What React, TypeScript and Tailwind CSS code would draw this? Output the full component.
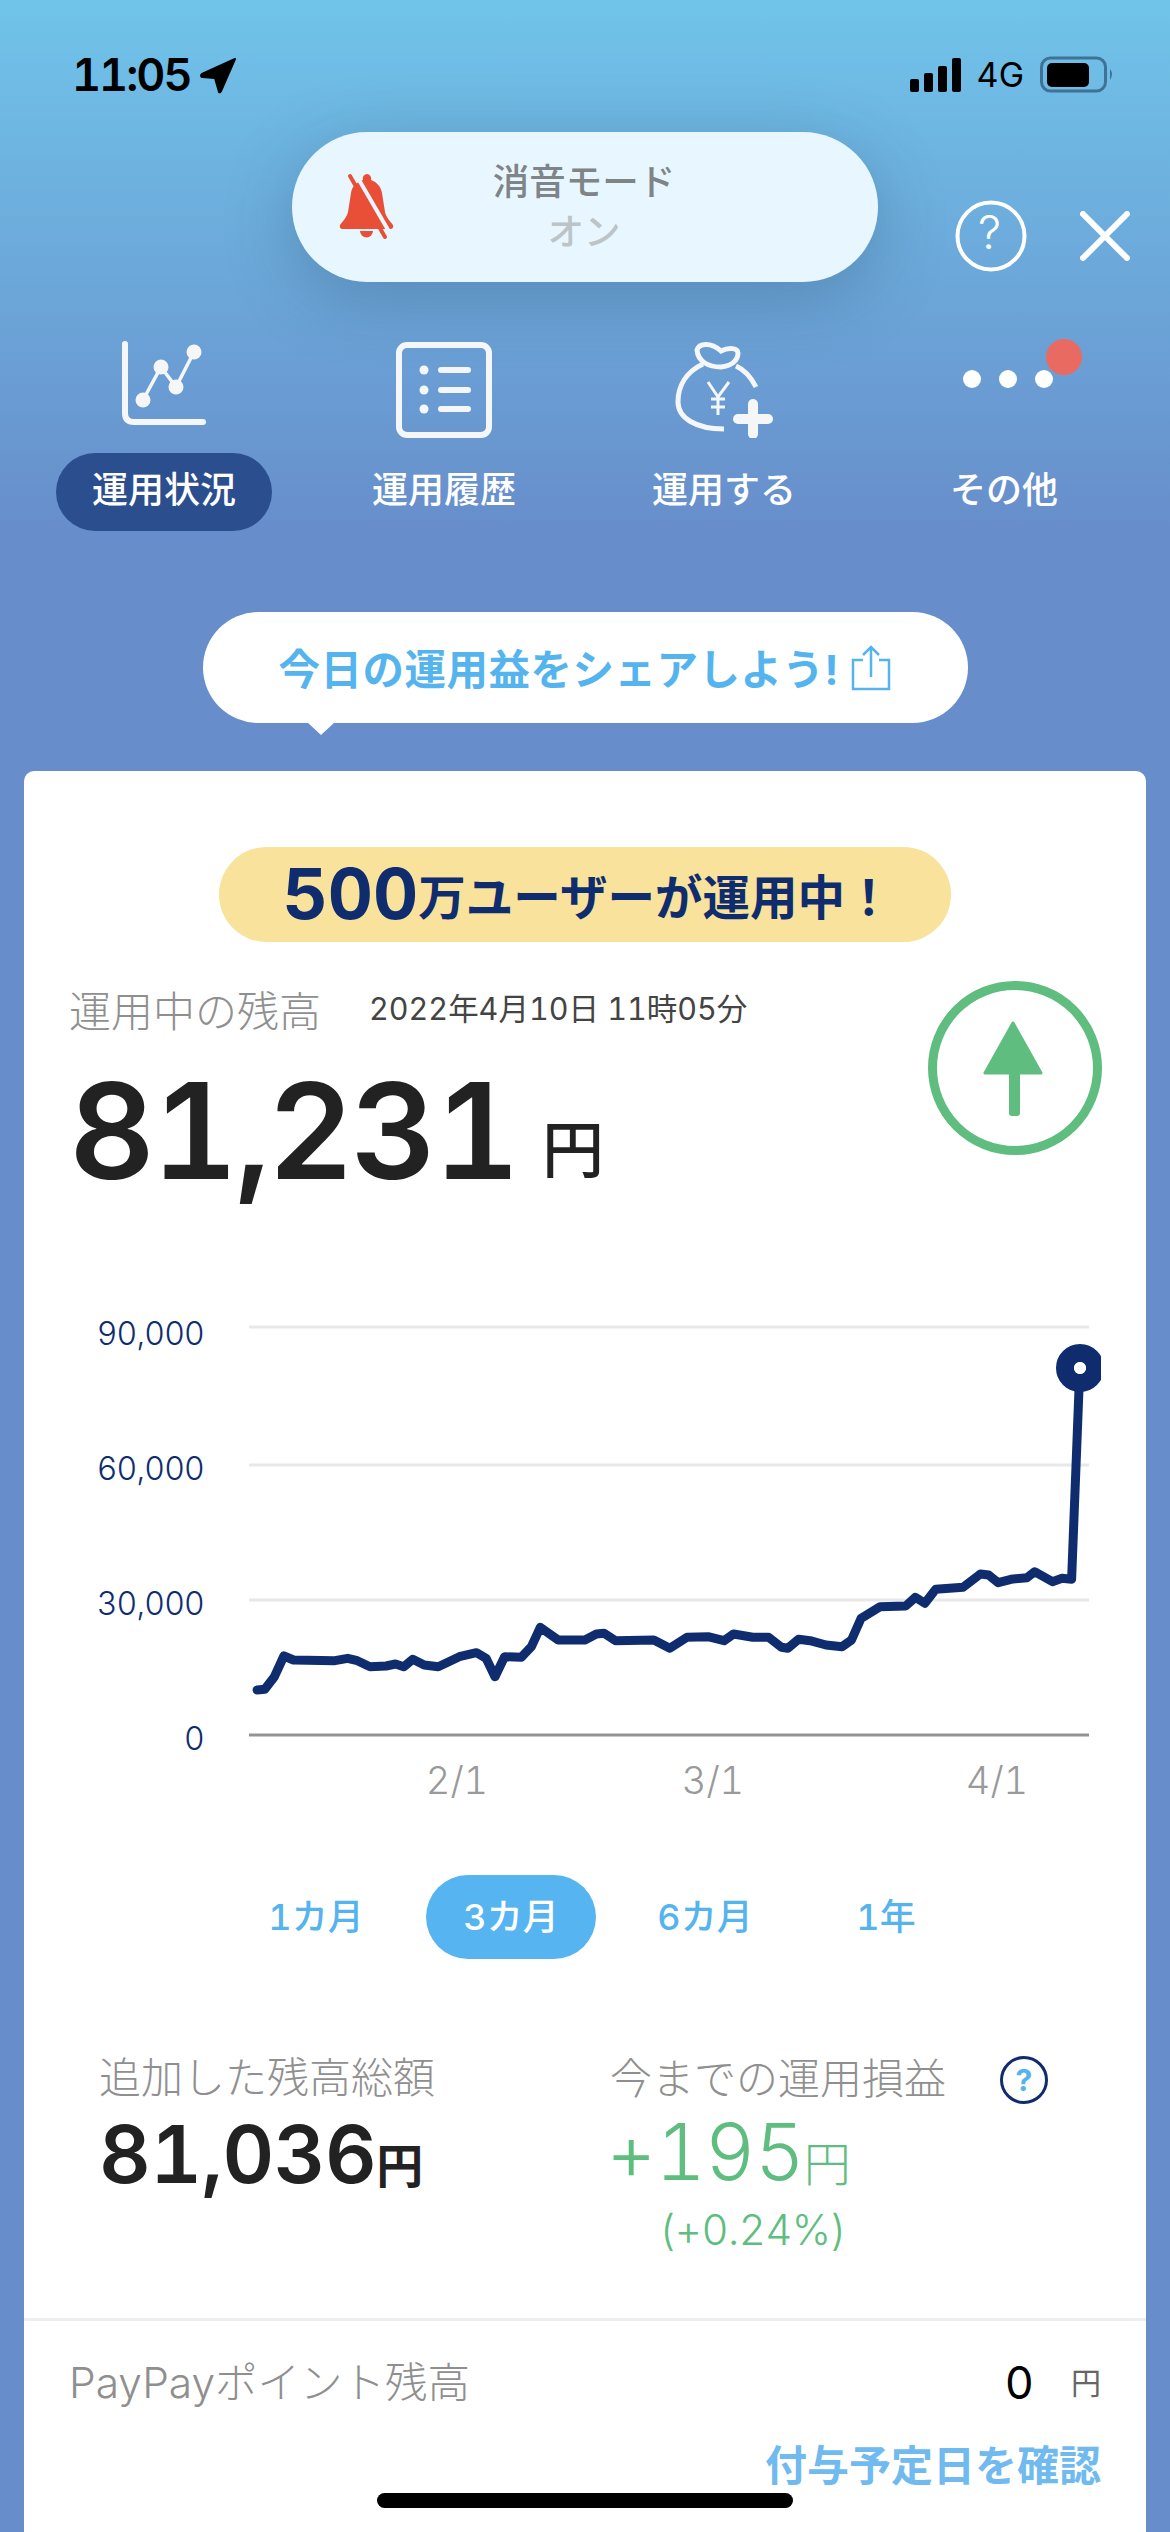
import React from 'react';

const FONT = '[font-family:Inter,"Noto_Sans_CJK_JP",sans-serif]';

// line points measured on the chart, page px = 150 + x / 1.568, 1300 + y / 3
const LINE = [
  [168, 1170], [180, 1168], [195, 1130], [210, 1068], [225, 1080], [290, 1082], [310, 1075], [325, 1082],
  [345, 1100], [370, 1098], [385, 1092], [398, 1100], [412, 1078], [430, 1095], [452, 1100], [485, 1070],
  [512, 1058], [527, 1075], [541, 1130], [556, 1070], [582, 1072], [598, 1040], [612, 982], [640, 1020],
  [682, 1020], [700, 1002], [712, 1000], [730, 1022], [790, 1020], [815, 1045], [842, 1012], [875, 1010],
  [900, 1022], [915, 1002], [945, 1012], [970, 1012], [990, 1042], [1000, 1045], [1017, 1018], [1035, 1022],
  [1060, 1035], [1085, 1040], [1100, 1020], [1115, 955], [1145, 920], [1185, 918], [1200, 892], [1215, 910],
  [1232, 868], [1275, 862], [1302, 822], [1315, 825], [1330, 848], [1350, 838], [1375, 833], [1387, 815],
  [1415, 845], [1430, 835], [1445, 838], [1458, 205],
];

const linePoints = LINE.map(([x, y]) => `${(126 + x / 1.568).toFixed(1)},${(y / 3).toFixed(1)}`).join(' ');

function StatusBar() {
  return (
    <div className="h-[132px] flex justify-between items-start pl-[72px] pr-[56px] pt-[56px] text-black">
      <div className="flex items-center h-[38px]">
        <span className="w-[128px] text-[45px] leading-[38px] font-semibold tracking-[-2px]">11:05</span>
        <svg width="37" height="37" viewBox="0 0 37 37">
          <path d="M35 2 L2 17 Q0 19 2 20 L15 21 L19 35 Q20 36 21 34 Z" fill="#000" stroke="#000" strokeWidth="2" strokeLinejoin="round" />
        </svg>
      </div>
      <div className="flex items-center h-[38px]">
        <svg width="52" height="34" viewBox="0 0 52 34" className="mr-[15px]">
          <rect x="0" y="21" width="9" height="13" rx="2" fill="#000" />
          <rect x="14" y="15" width="9" height="19" rx="2" fill="#000" />
          <rect x="28" y="8" width="9" height="26" rx="2" fill="#000" />
          <rect x="42" y="0" width="9" height="34" rx="2" fill="#000" />
        </svg>
        <span className="text-[34px] leading-[38px] font-normal mr-[16px]">4G</span>
        <svg width="74" height="38" viewBox="0 0 74 38">
          <rect x="1.5" y="2" width="64" height="33" rx="9" fill="none" stroke="#3f7396" strokeWidth="3" />
          <rect x="7" y="7" width="42" height="24" rx="5" fill="#000" />
          <path d="M70 13 q4 5 0 11 z" fill="#3f7396" />
        </svg>
      </div>
    </div>
  );
}

function MuteBell() {
  return (
    <svg width="60" height="68" viewBox="0 0 60 68">
      <path
        d="M28.700 1a4.500 4.500 0 0 1 4.300 6c6 2 10 7 11 13l3 19c1 5 5 9 8 13q1 3-2 4H4q-3-1-2-4c3-4 7-8 8-13l3-19c1-7 6-11 12-13a4.500 4.500 0 0 1 3.700-6Z"
        fill="#e94f37"
      />
      <path d="M22 58h13a6.500 6.500 0 0 1-13 0Z" fill="#e94f37" />
      <line x1="17" y1="0" x2="53" y2="62" stroke="#e8f7ff" strokeWidth="4" />
      <line x1="12" y1="3" x2="47" y2="64" stroke="#e94f37" strokeWidth="4" strokeLinecap="round" />
    </svg>
  );
}

function ChartIcon() {
  return (
    <svg width="96" height="96" viewBox="0 0 96 96">
      <path d="M5 3 V72 Q5 81 14 81 H83" fill="none" stroke="#f5f6f8" strokeWidth="6" strokeLinecap="round" />
      <polyline points="23,59 41,26 56,46 74,11" fill="none" stroke="#f5f6f8" strokeWidth="3.500" />
      <circle cx="23" cy="59" r="7.500" fill="#f5f6f8" />
      <circle cx="41" cy="26" r="7.500" fill="#f5f6f8" />
      <circle cx="56" cy="46" r="7.500" fill="#f5f6f8" />
      <circle cx="74" cy="11" r="7.500" fill="#f5f6f8" />
    </svg>
  );
}

function ListIcon() {
  return (
    <svg width="96" height="96" viewBox="0 0 96 96">
      <rect x="3" y="3" width="90" height="90" rx="8" fill="none" stroke="#f5f6f8" strokeWidth="6" />
      {[28, 48, 67].map((y) => (
        <g key={y}>
          <circle cx="28" cy={y} r="4.500" fill="#f5f6f8" />
          <line x1="45" y1={y} x2="72" y2={y} stroke="#f5f6f8" strokeWidth="6" strokeLinecap="round" />
        </g>
      ))}
    </svg>
  );
}

function BagIcon() {
  return (
    <svg width="104" height="104" viewBox="0 0 104 104">
      <g fill="none" stroke="#f5f6f8" strokeWidth="5">
        <path d="M85 53 C80 43 74 36 65 32" />
        <path d="M32 30 C15 38 7 52 7 68 C7 84 25 95 53 95" />
        <path d="M26 16 C28 9 40 8 50 17 C58 13 67 14 67 19 C67 27 60 32 50 33 C38 33 27 28 26 16Z" />
      </g>
      <g fill="none" stroke="#f5f6f8" strokeWidth="3">
        <polyline points="37,48 47,63 58,48" />
        <line x1="47" y1="63" x2="47" y2="81" />
        <line x1="40" y1="65" x2="54" y2="65" />
        <line x1="40" y1="73" x2="54" y2="73" />
      </g>
      <line x1="82" y1="70" x2="82" y2="100" stroke="#f5f6f8" strokeWidth="10" strokeLinecap="round" />
      <line x1="67" y1="85" x2="97" y2="85" stroke="#f5f6f8" strokeWidth="10" strokeLinecap="round" />
    </svg>
  );
}

function NavItem({ label, active, children }: { label: string; active?: boolean; children: React.ReactNode }) {
  return (
    <div className="flex flex-col items-center">
      <div className="h-[96px] flex items-start justify-center">{children}</div>
      <div
        className={`mt-[15px] h-[78px] w-[216px] rounded-full flex items-center justify-center text-white text-[36px] leading-[72px] pb-[5px] font-medium ${
          active ? 'bg-[#2b4e8f]' : ''
        }`}
      >
        {label}
      </div>
    </div>
  );
}

function Chart() {
  return (
    <svg width="1122" height="510" viewBox="0 0 1122 510" className="block">
      <defs>
        <clipPath id="marker-clip">
          <rect x="1020" y="30" width="57" height="80" />
        </clipPath>
      </defs>
      {[27, 165, 300].map((y) => (
        <line key={y} x1="225" x2="1065" y1={y} y2={y} stroke="#e8e8e8" strokeWidth="3" />
      ))}
      <line x1="225" x2="1065" y1="435" y2="435" stroke="#939393" strokeWidth="3" />
      <g fontSize="32" fontWeight="300" letterSpacing="-0.8" fill="#0f2d6e" textAnchor="end" fontFamily='Inter, "Noto Sans CJK JP", sans-serif'>
        <text x="180" y="45">90,000</text>
        <text x="180" y="180">60,000</text>
        <text x="180" y="315">30,000</text>
        <text x="180" y="450">0</text>
      </g>
      <g fontSize="38" fontWeight="300" fill="#999999" textAnchor="middle" fontFamily='Inter, "Noto Sans CJK JP", sans-serif'>
        <text x="433" y="494">2/1</text>
        <text x="689" y="494">3/1</text>
        <text x="973" y="494">4/1</text>
      </g>
      <polyline points={linePoints} fill="none" stroke="#0f2d6e" strokeWidth="9" strokeLinejoin="round" strokeLinecap="round" />
      <g clipPath="url(#marker-clip)">
        <circle cx="1056" cy="68" r="15" fill="#fff" stroke="#0f2d6e" strokeWidth="18" />
      </g>
      <circle cx="1056" cy="68" r="6" fill="#fff" />
    </svg>
  );
}

export default function App() {
  return (
    <div className={`relative w-[1170px] h-[2532px] overflow-hidden flex flex-col bg-[#678dca] tabular-nums ${FONT}`}>
      <div className="absolute inset-x-0 top-0 h-[540px] bg-gradient-to-b from-[#70c4ea] to-[#678dca]" />

      <div className="relative flex flex-col flex-1">
        <StatusBar />

        <div className="h-[150px] flex">
          <div className="w-[292px]" />
          <div className="w-[586px] rounded-[75px] bg-[#e8f7ff] shadow-[0_16px_70px_rgba(30,60,90,0.28)] flex items-center pl-[46px]">
            <MuteBell />
            <div className="w-[350px] ml-[11px] flex flex-col items-center font-medium">
              <span className="text-[36.5px] leading-[50px] text-[#7f8487]">消音モード</span>
              <span className="text-[36.5px] leading-[50px] text-[#bcc4c8]">オン</span>
            </div>
          </div>
          <div className="flex items-start pt-[68px] pl-[77px]">
            <svg width="72" height="72" viewBox="0 0 72 72">
              <circle cx="36" cy="36" r="33.500" fill="none" stroke="#fff" strokeWidth="4" />
            </svg>
            <span className="w-0 -ml-[49px] mr-[49px] mt-[4px] text-[46px] leading-[56px] font-light text-white">?</span>
            <svg width="50" height="50" viewBox="0 0 50 50" className="ml-[53px] mt-[11px]">
              <path d="M3 3 L47 47 M47 3 L3 47" stroke="#fff" strokeWidth="6" strokeLinecap="round" />
            </svg>
          </div>
        </div>

        <div className="grid grid-cols-[280px_280px_280px_280px] px-[24px] mt-[60px]">
          <NavItem label="運用状況" active>
            <div className="ml-[7px] -mt-[1px]">
              <ChartIcon />
            </div>
          </NavItem>
          <NavItem label="運用履歴">
            <ListIcon />
          </NavItem>
          <NavItem label="運用する">
            <div className="-ml-[2px] -mt-[8px]">
              <BagIcon />
            </div>
          </NavItem>
          <NavItem label="その他">
            <div className="relative w-[92px] h-[96px]">
              <div className="absolute left-[5px] top-[28px] w-[18px] h-[18px] rounded-full bg-white" />
              <div className="absolute left-[41px] top-[28px] w-[18px] h-[18px] rounded-full bg-white" />
              <div className="absolute left-[77px] top-[28px] w-[18px] h-[18px] rounded-full bg-white" />
              <div className="absolute left-[88px] top-[-3px] w-[36px] h-[36px] rounded-full bg-[#e96a60]" />
            </div>
          </NavItem>
        </div>

        <div className="relative self-center mt-[81px] w-[765px] h-[111px] rounded-full bg-white flex items-center pl-[76px]">
          <span className="mt-[5px] text-[41.5px] font-bold tracking-[0.5px] text-[#55b4ee]">今日の運用益をシェアしよう!</span>
          <svg width="40" height="46" viewBox="0 0 40 46" className="ml-[12px]">
            <path d="M12 15 H2 V44 H38 V15 H28 M20 32 V3 M12 10 L20 2 L28 10" fill="none" stroke="#55b4ee" strokeWidth="2.500" />
          </svg>
          <div className="absolute left-[104px] top-[110px] w-0 h-0 border-x-[14px] border-x-transparent border-t-[13px] border-t-white" />
        </div>

        <div className="mx-[24px] mt-[48px] flex-1 rounded-t-[10px] bg-white flex flex-col">
          <div className="self-center mt-[76px] w-[732px] h-[95px] rounded-full bg-[#f9e29b] flex items-center justify-center text-[#0f2d6e] font-bold pb-[2px] pl-[5px]">
            <span className="text-[70px] leading-none">500</span>
            <span className="text-[47.5px] leading-none mt-[8px]">万ユーザーが運用中！</span>
          </div>

          <div className="h-[358px] flex justify-between pl-[45px] pr-[44px]">
            <div>
              <div className="mt-[44px] h-[50px] flex items-center">
                <span className="text-[42px] font-light text-[#8f8f8f]">運用中の残高</span>
                <span className="ml-[48px] text-[30.5px] text-[#444444] -mt-[4px]">2022年4月10日 11時05分</span>
              </div>
              <div className="mt-[35px] flex items-end h-[120px] text-[#222222]">
                <span className="text-[133px] leading-[120px] font-semibold tracking-[-3px]">81,231</span>
                <span className="ml-[25px] text-[62px] leading-[80px] font-medium">円</span>
              </div>
            </div>
            <svg width="174" height="174" viewBox="0 0 174 174" className="mt-[39px]">
              <circle cx="87" cy="87" r="82.500" fill="none" stroke="#5fbd7f" strokeWidth="9" />
              <path d="M85 42 L57 92 H113 Z" fill="#5fbd7f" stroke="#5fbd7f" strokeWidth="3" strokeLinejoin="round" />
              <rect x="81" y="88" width="11" height="47" rx="3" fill="#5fbd7f" />
            </svg>
          </div>

          <Chart />

          <div className="mt-[65px] flex items-center pl-[207px] h-[84px] text-[36px] font-medium text-[#55b4ee]">
            <span className="w-[170px] text-center">1カ月</span>
            <span className="ml-[25px] w-[170px] h-[84px] rounded-full bg-[#56b5f0] text-white flex items-center justify-center">3カ月</span>
            <span className="ml-[24px] w-[170px] text-center">6カ月</span>
            <span className="ml-[31px] w-[130px] text-center">1年</span>
          </div>

          <div className="mt-[94px] flex">
            <div className="w-[586px] pl-[75px]">
              <div className="text-[42px] leading-[50px] font-light text-[#8f8f8f]">追加した残高総額</div>
              <div className="mt-[6px] h-[90px] flex items-end text-[#222222] font-semibold">
                <span className="text-[80px] leading-[90px] tracking-[-0.5px]">81,036</span>
                <span className="text-[47px] leading-[66px]">円</span>
              </div>
            </div>
            <div>
              <div className="flex items-center">
                <span className="text-[42px] leading-[50px] font-light text-[#8f8f8f]">今までの運用損益</span>
                <span className="ml-[54px] mt-[3px] w-[48px] h-[48px] rounded-full border-[3px] border-[#0f2d6e] flex items-center justify-center text-[30px] font-bold text-[#55b4ee]">?</span>
              </div>
              <div className="mt-[3px] h-[90px] flex items-end text-[#5fbd7f] font-light -ml-[4px]">
                <span className="text-[78px] leading-[90px] tracking-[-1px]">+195</span>
                <span className="text-[47px] leading-[66px]">円</span>
              </div>
              <div className="ml-[49px] mt-[8px] text-[42px] leading-[50px] font-light tracking-[-0.6px] text-[#5fbd7f]">(+0.24%)</div>
            </div>
          </div>

          <div className="mt-[63px] border-t-[3px] border-[#eeeeee] pt-[37px] px-[45px]">
            <div className="flex items-center justify-between h-[50px]">
              <span className="text-[42.5px] font-light text-[#8f8f8f]">PayPayポイント残高</span>
              <div className="flex items-center">
                <span className="text-[45px] text-black">0</span>
                <span className="ml-[37px] text-[30px] text-[#666666]">円</span>
              </div>
            </div>
            <div className="mt-[33px] text-right text-[42px] leading-[50px] font-bold text-[#70baf0]">付与予定日を確認</div>
          </div>
        </div>
      </div>

      <div className="absolute left-[377px] top-[2493px] w-[416px] h-[15px] rounded-full bg-black" />
    </div>
  );
}
